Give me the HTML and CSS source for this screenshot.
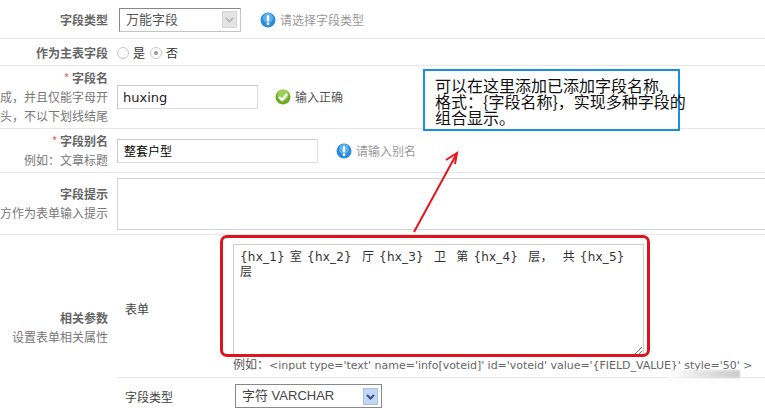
FILE: index.html
```html
<!DOCTYPE html>
<html lang="zh">
<head>
<meta charset="utf-8">
<title>字段</title>
<link rel="stylesheet" href="styles.css">
</head>
<body>
<div class="page">
  <div class="row r1">
    <div class="label"><b>字段类型</b></div>
    <div class="field">
      <div class="select s1"><span>万能字段</span>
        <svg class="arrow" width="15" height="17" viewBox="0 0 15 17"><rect x=".5" y=".5" width="14" height="16" fill="#e4e4e4" stroke="#d4d4d4"/><path d="M4 7l3.500 3.500L11 7" fill="none" stroke="#bbb" stroke-width="2"/></svg>
      </div>
      <span class="tip t1"><svg class="ic" width="16" height="16" viewBox="0 0 16 16"><use href="#info"/></svg>请选择字段类型</span>
    </div>
  </div>
  <div class="row r2">
    <div class="label"><b>作为主表字段</b></div>
    <div class="field radios">
      <i class="radio"></i><span class="rt">是</span>
      <i class="radio on"></i><span class="rt">否</span>
    </div>
  </div>
  <div class="row r3">
    <div class="label"><b><em>*</em> 字段名</b><small>成，并且仅能字母开</small><small>头，不以下划线结尾</small></div>
    <div class="field">
      <input class="input i1" type="text" value="huxing">
      <span class="tip ok"><svg class="ic" width="16" height="16" viewBox="0 0 16 16"><circle cx="8" cy="8" r="7.500" fill="#6cae22"/><circle cx="8" cy="6" r="5.500" fill="#9ccf55"/><path d="M4 8l3 3 5-6" fill="none" stroke="#fff" stroke-width="2.400"/></svg>输入正确</span>
    </div>
  </div>
  <div class="row r4">
    <div class="label"><b><em>*</em> 字段别名</b><small>例如：文章标题</small></div>
    <div class="field">
      <input class="input i2" type="text" value="整套户型">
      <span class="tip t2"><svg class="ic" width="16" height="16" viewBox="0 0 16 16"><use href="#info"/></svg>请输入别名</span>
    </div>
  </div>
  <div class="row r5">
    <div class="label"><b>字段提示</b><small>方作为表单输入提示</small></div>
    <div class="field"><div class="hintbox"></div></div>
  </div>
  <div class="row r6">
    <div class="label lp"><b>相关参数</b><small>设置表单相关属性</small></div>
    <div class="params">
      <div class="prow pform">
        <div class="plabel">表单</div>
        <div class="pfield">
          <textarea class="code" spellcheck="false">{hx_1} 室 {hx_2}  厅 {hx_3}  卫  第 {hx_4}  层，  共 {hx_5}
层</textarea>
          <div class="example">例如：<span>&lt;input type='text' name='info[voteid]' id='voteid' value='{FIELD_VALUE}' style='50' &gt;</span></div>
        </div>
      </div>
      <div class="prow ptype">
        <div class="plabel">字段类型</div>
        <div class="pfield">
          <div class="select s2"><span>字符 VARCHAR</span>
            <svg class="arrow" width="15" height="17" viewBox="0 0 15 17"><rect x=".5" y=".5" width="14" height="16" fill="#c3d6f5" stroke="#a9bfe6"/><path d="M4 7l3.500 3.500L11 7" fill="none" stroke="#3a4f80" stroke-width="2"/></svg>
          </div>
        </div>
      </div>
    </div>
  </div>

  <div class="smudge"></div>
  <div class="redbox"></div>
  <div class="note">可以在这里添加已添加字段名称,<br>格式：{字段名称}，实现多种字段的<br>组合显示。</div>
  <svg class="pointer" width="60" height="90" viewBox="0 0 60 90"><path d="M3 86L45 9" fill="none" stroke="#e8141c" stroke-width="2"/><path d="M35 14L46 7 44 18" fill="none" stroke="#e8141c" stroke-width="2"/></svg>

  <svg class="defs" width="0" height="0"><defs><g id="info"><circle cx="8" cy="8" r="7.500" fill="#2a8be0"/><circle cx="8" cy="6" r="5" fill="#5db0f0"/><rect x="6.800" y="3" width="2.400" height="6.500" rx="1" fill="#fff"/><circle cx="8" cy="11.800" r="1.400" fill="#fff"/></g></defs></svg>
</div>
</body>
</html>
```

FILE: styles.css
```css
html, body { margin: 0; padding: 0; background: #fff; }
.page {
  position: relative;
  width: 765px;
  height: 410px;
  overflow: hidden;
  font: 12px/16px "Noto Sans CJK SC", "Liberation Sans", sans-serif;
  color: #444;
}
.row {
  display: flex;
  box-sizing: border-box;
  border-bottom: 1px solid #e6e6e6;
}
.r1 { height: 39px; padding-top: 1px; }
.r2 { height: 27px; padding-top: 1px; }
.r3 { height: 63px; }
.r4 { height: 44px; }
.r5 { height: 62px; }
.r6 { height: 175px; border-bottom: 0; }
.label {
  flex: 0 0 108px;
  width: 108px;
  display: flex;
  flex-direction: column;
  align-items: flex-end;
  justify-content: center;
  gap: 3px;
  white-space: nowrap;
}
.lp { padding-top: 10px; box-sizing: border-box; }
.label b { font-weight: 700; color: #666; }
.label em { font-style: normal; font-weight: 400; color: #e8606a; }
.label small { font-size: 12px; color: #777; }
.field {
  flex: 1;
  display: flex;
  align-items: center;
  padding-left: 9px;
}
.select {
  box-sizing: border-box;
  display: flex;
  align-items: center;
  justify-content: space-between;
  background: #fff;
  border: 1px solid #888;
  border-right-color: #c4c4c4;
  border-bottom-color: #c4c4c4;
}
.select span { font: 13px/16px "Liberation Sans", "Noto Sans CJK SC", sans-serif; }
.s1 { width: 122px; height: 24px; margin: 0 0 0 2px; padding: 0 3px 0 6px; }
.s1 span { color: #555; }
.s2 { width: 147px; height: 24px; margin-left: 2px; padding: 0 3px 0 6px; border-color: #888; }
.s2 span { color: #444; }
.tip { display: inline-flex; align-items: center; gap: 4px; color: #999; white-space: nowrap; }
.t1 { margin-left: 19px; }
.t2 { margin-left: 18px; }
.ok { margin-left: 17px; color: #555; }
.radios { padding-left: 9px; gap: 4px; }
.radio {
  box-sizing: border-box;
  width: 12px;
  height: 12px;
  border: 1px solid #c8c8c8;
  border-radius: 50%;
  background: #fbfbfb;
  display: flex;
  align-items: center;
  justify-content: center;
}
.radio.on::after { content: ""; width: 4px; height: 4px; border-radius: 50%; background: #999; }
.rt { margin-right: 1px; color: #333; font-size: 12px; }
.input {
  box-sizing: border-box;
  height: 24px;
  padding: 0 5px;
  border: 1px solid #ddd;
  border-top-color: #c8c8c8;
  border-left-color: #c8c8c8;
  background: #fff;
  font: 13px "DejaVu Sans", "Noto Sans CJK SC", sans-serif;
  color: #222;
  outline: 0;
}
.i1 { width: 141px; }
.i2 { width: 201px; padding-left: 6px; font: 12px "Noto Sans CJK SC", sans-serif; color: #000; }
.hintbox {
  box-sizing: border-box;
  width: 100%;
  height: 52px;
  margin-top: 1px;
  border: 1px solid #d4d4d4;
  border-right: 0;
  background: #fff;
}
.params { flex: 1; margin-left: 10px; display: flex; flex-direction: column; }
.prow { display: flex; }
.pform { height: 143px; border-bottom: 1px solid #e6e6e6; box-sizing: border-box; }
.ptype { flex: 1; }
.plabel { flex: 0 0 115px; padding-left: 7px; box-sizing: border-box; color: #444; font-size: 12px; align-self: center; }
.pfield { display: flex; flex-direction: column; }
.pform .plabel { margin-top: 6px; }
.ptype .plabel { align-self: flex-start; margin-top: 11px; }
.code {
  box-sizing: border-box;
  display: block;
  width: 411px;
  height: 112px;
  margin: 9px 0 0;
  padding: 5px 6px;
  border: 1px solid #ccc;
  border-radius: 0;
  outline: 0;
  resize: both;
  background: #fff;
  font: 12px/15px "DejaVu Sans", "Noto Sans CJK SC", sans-serif;
  letter-spacing: .2px;
  word-spacing: 1px;
  color: #333;
  overflow: hidden;
}
.example { margin-top: 0; white-space: nowrap; color: #555; font-size: 12px; line-height: 16px; }
.example span { font-family: "DejaVu Sans", sans-serif; font-size: 11px; letter-spacing: -.025px; color: #666; }
.ptype .pfield { padding-top: 6px; }

/* annotations drawn over the form */
.redbox {
  position: absolute;
  left: 220px;
  top: 235px;
  width: 430px;
  height: 122px;
  box-sizing: border-box;
  border: 3px solid #dc141c;
  border-radius: 7px;
  pointer-events: none;
}
.note {
  position: absolute;
  left: 423px;
  top: 69px;
  width: 257px;
  height: 62px;
  box-sizing: border-box;
  padding: 6px 0 0 10px;
  border: 2px solid #1a8fe0;
  background: #fff;
  font: 16px/16px "Noto Sans CJK SC", sans-serif;
  color: #111;
  white-space: nowrap;
}
.pointer { position: absolute; left: 411px; top: 146px; }
.smudge {
  position: absolute;
  left: 668px;
  top: 370px;
  width: 72px;
  height: 8px;
  background: linear-gradient(to right, #fff, #ddd 60%, #ccc);
  filter: blur(1px);
}
.defs { position: absolute; }
```
